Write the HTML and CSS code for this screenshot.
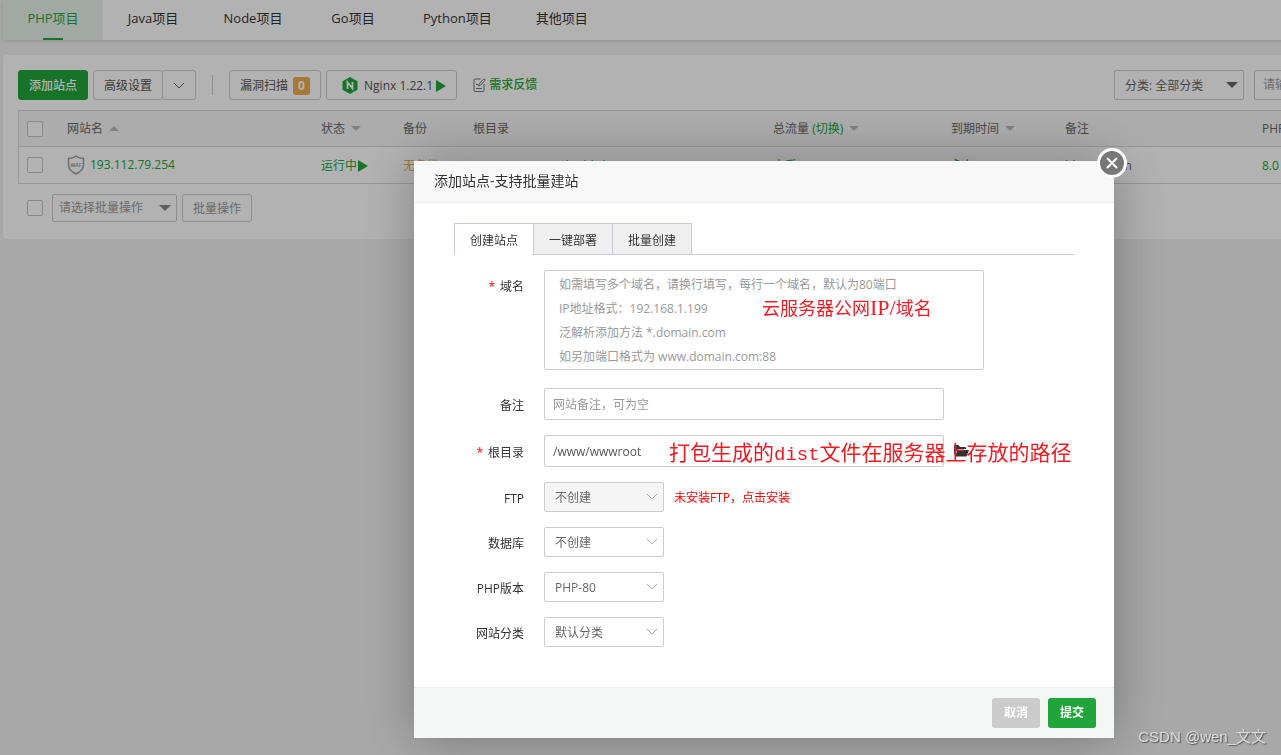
FILE: index.html
```html
<!DOCTYPE html>
<html lang="zh-CN">
<head>
<meta charset="utf-8">
<title>网站管理</title>
<link rel="stylesheet" href="styles.css">
</head>
<body>
<div class="page">
  <nav class="project-tabs">
    <a href="#" class="project-tab active">PHP项目</a>
    <a href="#" class="project-tab">Java项目</a>
    <a href="#" class="project-tab">Node项目</a>
    <a href="#" class="project-tab">Go项目</a>
    <a href="#" class="project-tab">Python项目</a>
    <a href="#" class="project-tab">其他项目</a>
  </nav>

  <main class="panel">
    <div class="toolbar">
      <button class="btn btn-primary">添加站点</button>
      <div class="btn-group">
        <button class="btn">高级设置</button>
        <button class="btn btn-caret" aria-label="更多">
          <svg width="12" height="8" viewBox="0 0 12 8"><path d="M1 1l5 5 5-5" fill="none" stroke="#666"/></svg>
        </button>
      </div>
      <span class="divider"></span>
      <button class="btn">漏洞扫描<span class="badge">0</span></button>
      <button class="btn btn-nginx">
        <svg width="16" height="17" viewBox="0 0 16 17"><path d="M8 0l7.500 4.200v8.600L8 17 .5 12.800V4.200z" fill="#20a53a"/><path d="M5.500 12V5.300l5 6.200V5" fill="none" stroke="#fff" stroke-width="1.800"/></svg>
        <span>Nginx 1.22.1</span>
        <svg width="10" height="12" viewBox="0 0 10 12"><path d="M0 0l10 6-10 6z" fill="#20a53a"/></svg>
      </button>
      <a href="#" class="feedback">
        <svg width="13" height="14" viewBox="0 0 13 14" fill="none" stroke="#777"><path d="M7.500 1H2Q1 1 1 2v10.500q0 1 1 1h8q1 0 1-1V6"/><path d="M3 6.500h2M3 10.500h6M5.500 8l.5-2L11 .8l1.300 1.300L7.400 7.300z"/></svg>
        <span>需求反馈</span>
      </a>
      <div class="toolbar-right">
        <div class="select-wrap">
          <select class="select category" aria-label="分类"><option>分类: 全部分类</option></select>
          <svg class="select-arrow" width="12" height="6" viewBox="0 0 12 6"><path d="M0 0h12L6 6z" fill="#666"/></svg>
        </div>
        <input class="input search" type="text" placeholder="请输入域名或备注" aria-label="搜索">
      </div>
    </div>

    <table class="site-table">
      <colgroup>
        <col class="col-check"><col class="col-name"><col class="col-status"><col class="col-backup"><col class="col-root"><col class="col-traffic"><col class="col-expire"><col class="col-remark"><col>
      </colgroup>
      <thead>
        <tr>
          <th><input type="checkbox" class="check" aria-label="全选"></th>
          <th>网站名<span class="sort up"></span></th>
          <th>状态<span class="sort"></span></th>
          <th>备份</th>
          <th>根目录</th>
          <th>总流量 <a href="#">(切换)</a><span class="sort"></span></th>
          <th>到期时间<span class="sort"></span></th>
          <th>备注</th>
          <th>PHP</th>
        </tr>
      </thead>
      <tbody>
        <tr>
          <td><input type="checkbox" class="check" aria-label="选择站点"></td>
          <td>
            <span class="site-name">
              <svg width="18" height="20" viewBox="0 0 18 20"><path d="M9 1Q12 3.500 16.500 3.500V10Q16.500 15.500 9 19 1.500 15.500 1.500 10V3.500Q6 3.500 9 1z" fill="none" stroke="#999" stroke-width="1.400"/><text x="9" y="12" text-anchor="middle" class="waf">WAF</text></svg>
              <a href="#">193.112.79.254</a>
            </span>
          </td>
          <td class="low"><a href="#" class="running">运行中<svg width="10" height="12" viewBox="0 0 10 12"><path d="M0 0l10 6-10 6z" fill="#20a53a"/></svg></a></td>
          <td class="low"><a href="#" class="warn">无备份</a></td>
          <td class="low"><a href="#">/www/wwwroot/build/dist</a></td>
          <td class="low"><a href="#">查看</a></td>
          <td class="low"><a href="#">永久</a></td>
          <td class="low">blog.wen.cn</td>
          <td class="low"><a href="#">8.0</a></td>
        </tr>
      </tbody>
    </table>

    <div class="batch">
      <input type="checkbox" class="check" aria-label="批量选择">
      <div class="select-wrap">
        <select class="select batch-select" aria-label="批量操作"><option>请选择批量操作</option></select>
        <svg class="select-arrow" width="12" height="6" viewBox="0 0 12 6"><path d="M0 0h12L6 6z" fill="#888"/></svg>
      </div>
      <button class="btn btn-batch">批量操作</button>
    </div>
  </main>
</div>

<div class="mask"></div>

<section class="dialog" role="dialog" aria-labelledby="dialog-title">
  <button class="dialog-close" aria-label="关闭">
    <svg width="12" height="12" viewBox="0 0 12 12"><path d="M1.500 1.500l9 9M10.500 1.500l-9 9" stroke="#fff" stroke-width="2" stroke-linecap="round"/></svg>
  </button>
  <h2 class="dialog-title" id="dialog-title">添加站点-支持批量建站</h2>

  <form class="dialog-body">
    <div class="form-tabs">
      <button type="button" class="form-tab active">创建站点</button>
      <button type="button" class="form-tab">一键部署</button>
      <button type="button" class="form-tab">批量创建</button>
    </div>

    <div class="field field-domain">
      <label for="domain"><span class="required">*</span>域名</label>
      <div class="control">
        <textarea id="domain" class="input domain" placeholder="如需填写多个域名，请换行填写，每行一个域名，默认为80端口&#10;IP地址格式：192.168.1.199&#10;泛解析添加方法 *.domain.com&#10;如另加端口格式为 www.domain.com:88"></textarea>
        <span class="note note-domain">云服务器公网<span>IP/</span>域名</span>
      </div>
    </div>
    <div class="field">
      <label for="remark">备注</label>
      <input id="remark" class="input text" type="text" placeholder="网站备注，可为空">
    </div>
    <div class="field">
      <label for="root"><span class="required">*</span>根目录</label>
      <div class="control">
        <input id="root" class="input text" type="text" value="/www/wwwroot">
        <svg class="folder" width="15" height="12" viewBox="0 0 15 12"><path d="M0 10V1q0-1 1-1h3.500l1.500 2h5q1 0 1 1v1H4z" fill="#333"/><path d="M3.500 5H15l-2.500 6.500H1z" fill="#333"/></svg>
        <span class="note note-root">打包生成的<span>dist</span>文件在服务器上存放的路径</span>
      </div>
    </div>
    <div class="field">
      <label for="ftp">FTP</label>
      <div class="select-wrap">
        <select id="ftp" class="select option" disabled><option>不创建</option></select>
        <svg class="select-arrow" width="12" height="8" viewBox="0 0 12 8"><path d="M1 1l5 5 5-5" fill="none" stroke="#aaa"/></svg>
      </div>
      <a href="#" class="ftp-tip">未安装FTP，点击安装</a>
    </div>
    <div class="field">
      <label for="database">数据库</label>
      <div class="select-wrap">
        <select id="database" class="select option"><option>不创建</option></select>
        <svg class="select-arrow" width="12" height="8" viewBox="0 0 12 8"><path d="M1 1l5 5 5-5" fill="none" stroke="#aaa"/></svg>
      </div>
    </div>
    <div class="field">
      <label for="php">PHP版本</label>
      <div class="select-wrap">
        <select id="php" class="select option"><option>PHP-80</option></select>
        <svg class="select-arrow" width="12" height="8" viewBox="0 0 12 8"><path d="M1 1l5 5 5-5" fill="none" stroke="#aaa"/></svg>
      </div>
    </div>
    <div class="field">
      <label for="category">网站分类</label>
      <div class="select-wrap">
        <select id="category" class="select option"><option>默认分类</option></select>
        <svg class="select-arrow" width="12" height="8" viewBox="0 0 12 8"><path d="M1 1l5 5 5-5" fill="none" stroke="#aaa"/></svg>
      </div>
    </div>
  </form>

  <footer class="dialog-footer">
    <button class="action cancel">取消</button>
    <button class="action submit">提交</button>
  </footer>
</section>

<div class="watermark">CSDN @wen_文文</div>
</body>
</html>
```

FILE: styles.css
```css
* {
  box-sizing: border-box;
}

body {
  margin: 0;
  min-height: 100vh;
  overflow: hidden;
  background: #f1f1f1;
  color: #666;
  font: 12px/18px "Open Sans", "Noto Sans CJK SC", sans-serif;
}

button,
input,
select,
textarea {
  margin: 0;
  color: inherit;
  font: inherit;
}

svg {
  flex: none;
}

a {
  color: #20a53a;
  text-decoration: none;
}

.page {
  min-width: 1500px;
  padding-left: 3px;
}

.project-tabs {
  display: flex;
  height: 40px;
  margin-bottom: 15px;
  background: #fff;
  border-radius: 0 0 4px 4px;
  box-shadow: 0 1px 4px rgba(0, 0, 0, 0.15);
}

.project-tab {
  position: relative;
  min-width: 100px;
  padding: 0 20px;
  color: #333;
  font-size: 13px;
  line-height: 36px;
  text-align: center;
}

.project-tab.active {
  background: #e8f3ed;
  color: #20a53a;
}

.project-tab.active::after {
  content: "";
  position: absolute;
  bottom: 0;
  left: 40px;
  width: 20px;
  height: 2px;
  background: #20a53a;
}

.panel {
  padding: 15px 15px 17px;
  background: #fff;
  border-radius: 4px;
}

.toolbar {
  display: flex;
  align-items: center;
  gap: 5px;
  margin-bottom: 10px;
}

.btn {
  display: flex;
  align-items: center;
  height: 30px;
  padding: 1px 10px 0;
  background: #fff;
  border: 1px solid #ccc;
  border-radius: 3px;
  color: #555;
  white-space: nowrap;
}

.btn-primary {
  background: #20a53a;
  border-color: #20a53a;
  color: #fff;
  font-weight: 500;
}

.btn-group {
  display: flex;
}

.btn-caret {
  margin-left: -1px;
}

.divider {
  width: 1px;
  height: 20px;
  margin: 0 11px;
  background: #ccc;
}

.badge {
  width: 17px;
  margin-left: 5px;
  background: #f0ad4e;
  border-radius: 3px;
  color: #fff;
  font-weight: 700;
  text-align: center;
}

.btn-nginx {
  padding-left: 15px;
}

.btn-nginx span {
  margin: 0 3px 0 6px;
}

.feedback {
  display: flex;
  align-items: center;
  gap: 3px;
  margin-left: 11px;
  font-weight: 500;
}

.toolbar-right {
  display: flex;
  gap: 10px;
  margin-left: auto;
}

.select-wrap {
  position: relative;
  display: flex;
}

.select {
  height: 30px;
  padding: 1px 10px 0;
  appearance: none;
  background: #fff;
  border: 1px solid #ccc;
  border-radius: 2px;
  color: #666;
  opacity: 1;
}

.select:disabled {
  background: #f5f5f5;
}

.select-arrow {
  position: absolute;
  top: 50%;
  right: 6px;
  transform: translateY(-50%);
  pointer-events: none;
}

.category {
  width: 130px;
}

.input {
  background: #fff;
  border: 1px solid #ccc;
  border-radius: 2px;
  color: #555;
  outline: none;
}

.input::placeholder {
  color: #999;
  opacity: 1;
}

.search {
  width: 231px;
  padding: 0 8px;
}

.site-table {
  width: 100%;
  table-layout: fixed;
  border: 1px solid #d8d8d8;
  border-spacing: 0;
}

.site-table th,
.site-table td {
  height: 36px;
  padding: 0 8px;
  font-weight: 400;
  text-align: left;
  white-space: nowrap;
}

.site-table th {
  background: #f6f6f6;
  border-bottom: 1px solid #d8d8d8;
}

.site-table td.low {
  padding-top: 2px;
}

.col-check { width: 40px; }
.col-name { width: 254px; }
.col-status { width: 82px; }
.col-backup { width: 70px; }
.col-root { width: 300px; }
.col-traffic { width: 178px; }
.col-expire { width: 114px; }
.col-remark { width: 197px; }

.check {
  display: block;
  flex: none;
  width: 16px;
  height: 16px;
  appearance: none;
  background: #fff;
  border: 1px solid #c4c4c4;
  border-radius: 2px;
}

.sort {
  display: inline-block;
  margin-left: 6px;
  border: 5px solid transparent;
  border-top-color: #bbb;
  border-bottom: 0;
  vertical-align: 2px;
}

.sort.up {
  border-top: 0;
  border-bottom: 5px solid #bbb;
}

.site-name {
  display: flex;
  align-items: center;
  gap: 5px;
}

.waf {
  fill: #999;
  font-size: 5px;
  font-weight: 700;
}

.running {
  display: flex;
  align-items: center;
  gap: 1px;
}

.warn {
  color: #f0ad4e;
}

.batch {
  display: flex;
  align-items: center;
  gap: 5px;
  padding: 10px 0 0 9px;
}

.batch-select {
  width: 125px;
  height: 28px;
  margin-left: 4px;
  padding: 0 6px;
  color: #999;
}

.btn-batch {
  height: 28px;
  color: #999;
}

.mask {
  position: fixed;
  inset: 0;
  background: rgba(0, 0, 0, 0.3);
}

.dialog {
  position: fixed;
  top: 161px;
  left: 414px;
  width: 700px;
  background: #fff;
  box-shadow: 1px 1px 50px rgba(0, 0, 0, 0.3);
  color: #333;
}

.dialog-close {
  position: absolute;
  top: -13px;
  right: -13px;
  display: grid;
  place-items: center;
  width: 30px;
  height: 30px;
  padding: 0;
  background: #777;
  border: 3px solid #fff;
  border-radius: 50%;
}

.dialog-title {
  margin: 0;
  padding: 0 20px 2px;
  background: #f8f8f8;
  border-bottom: 1px solid #eee;
  font-size: 14px;
  font-weight: 400;
  line-height: 39px;
}

.dialog-body {
  display: flex;
  flex-direction: column;
  gap: 15px;
  padding: 20px 40px 40px;
}

.form-tabs {
  display: flex;
  height: 32px;
  border-bottom: 1px solid #c8c8d8;
}

.form-tab {
  width: 80px;
  height: 32px;
  margin-right: -1px;
  padding: 3px 0 0;
  background: #efefef;
  border: 1px solid #c8c8d8;
}

.form-tab.active {
  background: #fff;
  border-bottom-color: #fff;
}

.field {
  display: flex;
  align-items: center;
}

.field label {
  width: 70px;
  margin-right: 20px;
  padding-top: 3px;
  text-align: right;
}

.field-domain {
  align-items: flex-start;
  margin-bottom: 3px;
}

.field-domain label {
  padding-top: 8px;
}

.required {
  margin-right: 5px;
  color: #f00;
}

.control {
  position: relative;
  display: flex;
  align-items: center;
}

.domain {
  width: 440px;
  height: 100px;
  padding: 2px 14px;
  line-height: 24px;
  resize: none;
}

.text {
  width: 400px;
  height: 32px;
  padding: 0 8px;
}

.folder {
  margin-left: 10px;
}

.option {
  width: 120px;
}

.ftp-tip {
  margin-left: 10px;
  padding-top: 2px;
  color: #f00;
}

.note {
  position: absolute;
  color: #ed1c24;
  white-space: nowrap;
  pointer-events: none;
}

.note span {
  font-family: "Liberation Mono", monospace;
}

.note-domain {
  top: 26px;
  left: 218px;
  font-size: 18px;
  line-height: 24px;
}

.note-domain span {
  font-family: "Liberation Serif", serif;
  font-size: 22px;
}

.note-root {
  top: 3px;
  left: 125px;
  font-size: 21px;
  line-height: 28px;
}

.note-root span {
  font-size: 19px;
}

.dialog-footer {
  display: flex;
  justify-content: flex-end;
  gap: 8px;
  padding: 10px 18px;
  background: #f5f7f7;
  border-top: 1px solid #e9eeee;
}

.action {
  width: 48px;
  height: 30px;
  padding: 0;
  border: 0;
  border-radius: 3px;
  color: #fff;
  font-weight: 700;
}

.cancel {
  background: #cbcbcb;
}

.submit {
  background: #20a53a;
}

.watermark {
  position: fixed;
  right: 15px;
  bottom: 6px;
  color: #ddd;
  font: 15px/24px "Liberation Sans", "Noto Sans CJK SC", sans-serif;
  text-shadow: 1px 1px 1px #555;
}
```
